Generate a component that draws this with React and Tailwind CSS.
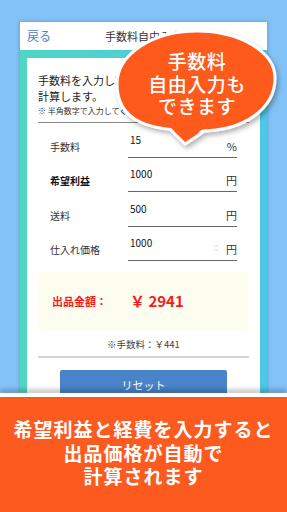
import React from "react";

const rows = [
  { label: "手数料", value: "15", unit: "%" },
  { label: "希望利益", value: "1000", unit: "円", bold: true },
  { label: "送料", value: "500", unit: "円" },
  { label: "仕入れ価格", value: "1000", unit: "円", spinner: true },
];

const blob = "M117 84 C117 54 153 31 197 31 C240 31 275 52 275 78 C275 108 245 131 200 131 C150 131 117 122 117 84 Z";

function Bubble() {
  return (
    <div className="absolute left-[112px] top-[24px] w-[175px] h-[128px]">
      <svg width="175" height="128" viewBox="112 24 175 128" className="absolute inset-0">
        <defs>
          <filter id="sh" x="-20%" y="-20%" width="140%" height="150%">
            <feDropShadow dx="2" dy="3" stdDeviation="2.5" floodColor="#000" floodOpacity="0.3" />
          </filter>
        </defs>
        <g filter="url(#sh)">
          <path
            d="M165 124 Q176 135 185 144 Q196 137 210 127 Z"
            fill="#fd5a1f"
            stroke="#fff"
            strokeWidth="3"
            strokeLinejoin="round"
          />
          <path d={blob} fill="#fd5a1f" stroke="#fff" strokeWidth="3" />
          <path d="M167 124 Q177 134 185 141 Q195 135 207 126 Z" fill="#fd5a1f" />
        </g>
      </svg>
      <div className="absolute left-[9px] top-[26px] w-[152px] flex flex-col items-center text-white text-[19px] leading-[22.5px] font-medium tracking-[0.5px]">
        <span>手数料</span>
        <span>自由入力も</span>
        <span>できます</span>
      </div>
    </div>
  );
}

export default function App() {
  return (
    <div
      className="relative w-[287px] h-[512px] overflow-hidden bg-[#82c2f7] flex flex-col"
      style={{ fontFamily: '"Noto Sans CJK JP", "Noto Sans", sans-serif' }}
    >
      <div className="pt-[22px] px-[20px]">
        <div className="h-[371px] flex flex-col shadow-[0_0_4px_rgba(0,0,0,0.25)]">
          <div className="h-[28px] bg-white flex items-center relative shrink-0">
            <span className="pl-[7px] text-[12px] text-[#4a7fc8]">戻る</span>
            <span className="absolute left-0 right-0 text-center text-[11px] text-[#333]">手数料自由入力</span>
          </div>
          <div className="flex-1 bg-gradient-to-r from-[#4fd6c4] to-[#4cc8e8] px-[7px] pt-[8px] overflow-hidden">
            <div className="bg-white h-full px-[11px] pt-[14px]">
              <p className="text-[11px] leading-[16px] text-[#222]">
                手数料を入力して出品価格を
                <br />
                計算します。
              </p>
              <p className="text-[8px] leading-[12px] text-[#333] mt-[1px]">※ 半角数字で入力してください</p>
              <div className="h-px bg-[#888] mt-[5px]" />
              {rows.map((r) => (
                <div key={r.label} className="h-[34.5px] flex items-end">
                  <span
                    className={`w-[90px] pl-[12px] pb-[5px] text-[10px] leading-[12px] ${
                      r.bold ? "font-bold text-[#111]" : "text-[#333]"
                    }`}
                  >
                    {r.label}
                  </span>
                  <div className="w-[109px] h-[24px] border-b border-[#666] flex justify-between pl-[2px]">
                    <span className="self-start text-[10px] leading-[12px] text-[#111]">{r.value}</span>
                    <div className="self-end flex items-end gap-[7px] pb-[5px]">
                      {r.spinner && (
                        <svg width="5" height="8" viewBox="0 0 5 8" className="mb-[3px]">
                          <path d="M1 3 L2.5 1 L4 3 M1 5 L2.5 7 L4 5" fill="none" stroke="#ccc" strokeWidth="0.8" />
                        </svg>
                      )}
                      <span className="text-[11px] leading-[12px] text-[#333]">{r.unit}</span>
                    </div>
                  </div>
                </div>
              ))}
              <div className="mt-[11px] h-[59px] rounded-[4px] bg-[#fdfdf0] flex items-center pl-[14px]">
                <span className="w-[78px] text-[11px] font-bold text-[#f41c1c]">出品金額：</span>
                <span className="text-[15px] font-bold text-[#f41c1c]">￥ 2941</span>
              </div>
              <p className="mt-[7px] text-center text-[9.5px] leading-[12px] text-[#444]">※手数料：￥441</p>
              <div className="mt-[6px] h-[2px] bg-[#d4d4d4]" />
              <div className="mt-[12px] mx-auto w-[167px] h-[30px] rounded-[2px] bg-[#4a84c8] flex items-center justify-center">
                <span className="text-[11px] text-white">リセット</span>
              </div>
            </div>
          </div>
        </div>
      </div>
      <div className="relative h-[4px] bg-white shadow-[0_-3px_5px_rgba(0,0,0,0.3)]" />
      <div className="h-[115px] bg-[#fd5a1f] flex flex-col items-center justify-center pb-[4px] text-white text-[19px] leading-[23.5px] font-bold tracking-[1px]">
        <span>希望利益と経費を入力すると</span>
        <span>出品価格が自動で</span>
        <span>計算されます</span>
      </div>
      <Bubble />
    </div>
  );
}
